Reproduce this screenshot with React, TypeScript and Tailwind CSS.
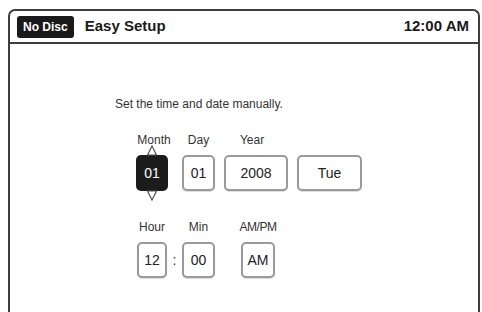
import React from 'react'

const font = { fontFamily: '"Liberation Sans", Arial, sans-serif' }

function Box({ value, width, dark = false }: { value: string; width: string; dark?: boolean }) {
  return (
    <div
      className={`${width} h-[36px] flex items-center justify-center rounded-[5px] text-[14px] ${
        dark
          ? 'bg-[#1c1c1c] text-white border-2 border-[#1c1c1c]'
          : 'bg-white text-[#222] border-2 border-[#9a9a9a] shadow-[0_1px_1px_rgba(0,0,0,0.15)]'
      }`}
    >
      {value}
    </div>
  )
}

function Label({ children }: { children: React.ReactNode }) {
  return <div className="h-[16px] text-[12px] leading-[16px] text-[#333] text-center">{children}</div>
}

export default function App() {
  return (
    <div className="w-[482px] h-[312px] bg-white overflow-hidden pt-[9px] pl-[8px] pr-[2px]" style={font}>
      <div className="h-[303px] border-2 border-b-0 border-[#3d3d3d] rounded-t-[7px] flex flex-col">
        {/* Header */}
        <div className="h-[33px] flex items-center border-b-2 border-[#3d3d3d] pl-[7px] pr-[9px]">
          <span className="bg-[#1a1a1a] text-white font-bold text-[12px] leading-none px-[6px] py-[5px] rounded-[3px]">
            No Disc
          </span>
          <span className="ml-[11px] font-bold text-[15px] text-[#1a1a1a]">Easy Setup</span>
          <span className="ml-auto font-bold text-[15px] text-[#1a1a1a]">12:00 AM</span>
        </div>

        {/* Body */}
        <div className="flex flex-col pl-[105px] pt-[51px]">
          <div className="text-[12px] text-[#333]">Set the time and date manually.</div>

          {/* Date row */}
          <div className="flex items-end mt-[19px] pl-[21px]">
            <div className="flex flex-col items-center w-[32px]">
              <div className="w-[40px] text-center pl-[4px]"><Label>Month</Label></div>
              <div className="relative mt-[7px]">
                <Box value="01" width="w-[32px]" dark />
                <svg className="absolute left-1/2 -translate-x-1/2 -top-[10px]" width="12" height="11" viewBox="0 0 12 11">
                  <path d="M6 1 L10.5 10 L1.5 10 Z" fill="white" stroke="#555" strokeWidth="1.2" />
                </svg>
                <svg className="absolute left-1/2 -translate-x-1/2 -bottom-[10px]" width="12" height="11" viewBox="0 0 12 11">
                  <path d="M6 10 L10.5 1 L1.5 1 Z" fill="white" stroke="#555" strokeWidth="1.2" />
                </svg>
              </div>
            </div>
            <div className="flex flex-col items-center w-[33px] ml-[14px]">
              <Label>Day</Label>
              <div className="mt-[7px]"><Box value="01" width="w-[33px]" /></div>
            </div>
            <div className="flex flex-col items-center w-[64px] ml-[9px]">
              <div className="pr-[8px]"><Label>Year</Label></div>
              <div className="mt-[7px]"><Box value="2008" width="w-[64px]" /></div>
            </div>
            <div className="ml-[9px]">
              <Box value="Tue" width="w-[65px]" />
            </div>
          </div>

          {/* Time row */}
          <div className="flex items-end mt-[28px] pl-[22px]">
            <div className="flex flex-col items-center w-[30px]">
              <Label>Hour</Label>
              <div className="mt-[7px]"><Box value="12" width="w-[30px]" /></div>
            </div>
            <div className="w-[15px] h-[36px] flex items-center justify-center text-[14px] text-[#333]">:</div>
            <div className="flex flex-col items-center w-[33px]">
              <Label>Min</Label>
              <div className="mt-[7px]"><Box value="00" width="w-[33px]" /></div>
            </div>
            <div className="flex flex-col items-center w-[34px] ml-[26px]">
              <div className="text-[11px] tracking-[-0.5px]"><Label>AM/PM</Label></div>
              <div className="mt-[7px]"><Box value="AM" width="w-[34px]" /></div>
            </div>
          </div>
        </div>
      </div>
    </div>
  )
}
